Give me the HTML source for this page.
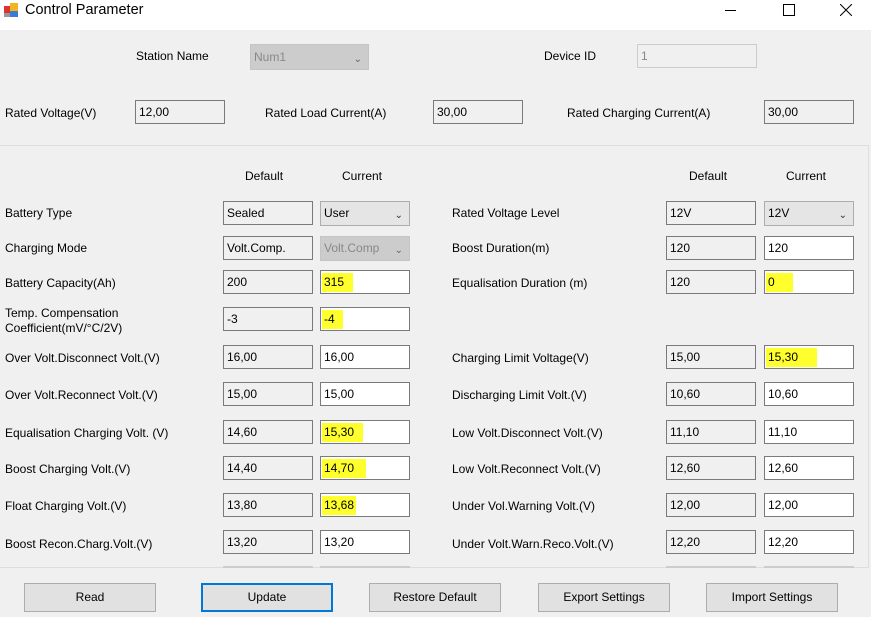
<!DOCTYPE html><html><head><style>
body{margin:0;width:871px;height:617px;background:#f0f0f0;font-family:"Liberation Sans",sans-serif;font-size:12px;color:#000;position:relative;overflow:hidden}
.a{position:absolute;white-space:nowrap}
.t{position:absolute;border:1px solid #7a7a7a;background:#f0f0f0;box-sizing:border-box;height:24px;line-height:22px;padding-left:3px}
.w{background:#fff}
.c{background:#e5e5e5;border-color:#adadad}
.d{background:#ccc;border-color:#c4c4c4;color:#888}
.b{position:absolute;top:583px;width:132px;height:29px;box-sizing:border-box;border:1px solid #adadad;background:#e1e1e1;text-align:center;line-height:27px}
.h{background:#ffff2e;padding:2px 2px 3px;margin-left:-2px}
.ar{position:absolute;right:6px;top:3px;color:#666;font-size:10px}
</style></head><body>
<div class="a" style="left:0;top:0;width:871px;height:30px;background:#fff"></div>
<svg class="a" style="left:3px;top:2px" width="16" height="16"><rect x="1" y="4" width="6" height="7" fill="#d33"/><rect x="7" y="1" width="8" height="8" fill="#f2b51c"/><rect x="7" y="9" width="8" height="6" fill="#3a7bd5"/><rect x="1" y="11" width="6" height="4" fill="#999"/></svg>
<div class="a" style="left:25px;top:2px;font-size:14.5px">Control Parameter</div>
<div class="a" style="left:725px;top:10px;width:11px;height:1px;background:#000"></div>
<div class="a" style="left:783px;top:4px;width:10px;height:10px;border:1px solid #000"></div>
<svg class="a" style="left:840px;top:4px" width="12" height="12"><path d="M0 0L12 12M12 0L0 12" stroke="#000"/></svg>

<div class="a" style="left:136px;top:49px">Station Name</div>
<div class="t d" style="left:250px;top:44px;width:119px;height:26px;line-height:24px">Num1<span class="ar">&#8964;</span></div>
<div class="a" style="left:544px;top:49px">Device ID</div>
<div class="t" style="left:637px;top:44px;width:120px;border-color:#ccc;color:#888">1</div>
<div class="a" style="left:5px;top:106px">Rated Voltage(V)</div>
<div class="t" style="left:135px;top:100px;width:90px">12,00</div>
<div class="a" style="left:265px;top:106px">Rated Load Current(A)</div>
<div class="t" style="left:433px;top:100px;width:90px">30,00</div>
<div class="a" style="left:567px;top:106px">Rated Charging Current(A)</div>
<div class="t" style="left:764px;top:100px;width:90px">30,00</div>
<div class="a" style="left:0;top:145px;width:868px;height:421px;border-top:1px solid #ddd;border-right:1px solid #ddd;border-bottom:1px solid #ddd"></div>
<div class="a" style="left:223px;top:566px;width:90px;height:2px;background:#ccc"></div>
<div class="a" style="left:320px;top:566px;width:90px;height:2px;background:#ccc"></div>
<div class="a" style="left:666px;top:566px;width:90px;height:2px;background:#ccc"></div>
<div class="a" style="left:764px;top:566px;width:90px;height:2px;background:#ccc"></div>
<div class="a" style="left:245px;top:169px">Default</div><div class="a" style="left:342px;top:169px">Current</div>
<div class="a" style="left:689px;top:169px">Default</div><div class="a" style="left:786px;top:169px">Current</div>

<div class="a" style="left:5px;top:206px">Battery Type</div>
<div class="t" style="left:223px;top:201px;width:90px">Sealed</div>
<div class="t c" style="left:320px;top:201px;width:90px;height:25px">User<span class="ar" style="color:#333">&#8964;</span></div>
<div class="a" style="left:5px;top:241px">Charging Mode</div>
<div class="t" style="left:223px;top:236px;width:90px">Volt.Comp.</div>
<div class="t d" style="left:320px;top:236px;width:90px;height:25px">Volt.Comp<span class="ar">&#8964;</span></div>
<div class="a" style="left:5px;top:276px">Battery Capacity(Ah)</div>
<div class="t" style="left:223px;top:270px;width:90px">200</div>
<div class="t w" style="left:320px;top:270px;width:90px"><span class="h">315&nbsp;&nbsp;</span></div>
<div class="a" style="left:5px;top:306px;line-height:15px">Temp. Compensation<br>Coefficient(mV/°C/2V)</div>
<div class="t" style="left:223px;top:307px;width:90px">-3</div>
<div class="t w" style="left:320px;top:307px;width:90px"><span class="h">-4&nbsp;&nbsp;</span></div>

<div class="a" style="left:452px;top:206px">Rated Voltage Level</div>
<div class="t" style="left:666px;top:201px;width:90px">12V</div>
<div class="t c" style="left:764px;top:201px;width:90px;height:25px">12V<span class="ar" style="color:#333">&#8964;</span></div>
<div class="a" style="left:452px;top:241px">Boost Duration(m)</div>
<div class="t" style="left:666px;top:236px;width:90px">120</div>
<div class="t w" style="left:764px;top:236px;width:90px">120</div>
<div class="a" style="left:452px;top:276px">Equalisation Duration (m)</div>
<div class="t" style="left:666px;top:270px;width:90px">120</div>
<div class="t w" style="left:764px;top:270px;width:90px"><span class="h">0&nbsp;&nbsp;&nbsp;&nbsp;&nbsp;</span></div>

<div class="a" style="left:5px;top:351px">Over Volt.Disconnect Volt.(V)</div><div class="t" style="left:223px;top:345px;width:90px">16,00</div><div class="t w" style="left:320px;top:345px;width:90px">16,00</div>
<div class="a" style="left:5px;top:388px">Over Volt.Reconnect Volt.(V)</div><div class="t" style="left:223px;top:382px;width:90px">15,00</div><div class="t w" style="left:320px;top:382px;width:90px">15,00</div>
<div class="a" style="left:5px;top:426px">Equalisation Charging Volt. (V)</div><div class="t" style="left:223px;top:420px;width:90px">14,60</div><div class="t w" style="left:320px;top:420px;width:90px"><span class="h">15,30&nbsp;&nbsp;</span></div>
<div class="a" style="left:5px;top:462px">Boost Charging Volt.(V)</div><div class="t" style="left:223px;top:456px;width:90px">14,40</div><div class="t w" style="left:320px;top:456px;width:90px"><span class="h">14,70&nbsp;&nbsp;&nbsp;</span></div>
<div class="a" style="left:5px;top:499px">Float Charging Volt.(V)</div><div class="t" style="left:223px;top:493px;width:90px">13,80</div><div class="t w" style="left:320px;top:493px;width:90px"><span class="h">13,68</span></div>
<div class="a" style="left:5px;top:537px">Boost Recon.Charg.Volt.(V)</div><div class="t" style="left:223px;top:530px;width:90px">13,20</div><div class="t w" style="left:320px;top:530px;width:90px">13,20</div>

<div class="a" style="left:452px;top:351px">Charging Limit Voltage(V)</div><div class="t" style="left:666px;top:345px;width:90px">15,00</div><div class="t w" style="left:764px;top:345px;width:90px"><span class="h">15,30&nbsp;&nbsp;&nbsp;&nbsp;&nbsp;</span></div>
<div class="a" style="left:452px;top:388px">Discharging Limit Volt.(V)</div><div class="t" style="left:666px;top:382px;width:90px">10,60</div><div class="t w" style="left:764px;top:382px;width:90px">10,60</div>
<div class="a" style="left:452px;top:426px">Low Volt.Disconnect Volt.(V)</div><div class="t" style="left:666px;top:420px;width:90px">11,10</div><div class="t w" style="left:764px;top:420px;width:90px">11,10</div>
<div class="a" style="left:452px;top:462px">Low Volt.Reconnect Volt.(V)</div><div class="t" style="left:666px;top:456px;width:90px">12,60</div><div class="t w" style="left:764px;top:456px;width:90px">12,60</div>
<div class="a" style="left:452px;top:499px">Under Vol.Warning Volt.(V)</div><div class="t" style="left:666px;top:493px;width:90px">12,00</div><div class="t w" style="left:764px;top:493px;width:90px">12,00</div>
<div class="a" style="left:452px;top:537px">Under Volt.Warn.Reco.Volt.(V)</div><div class="t" style="left:666px;top:530px;width:90px">12,20</div><div class="t w" style="left:764px;top:530px;width:90px">12,20</div>

<div class="b" style="left:24px">Read</div>
<div class="b" style="left:201px;border:2px solid #0078d7;line-height:25px">Update</div>
<div class="b" style="left:369px">Restore Default</div>
<div class="b" style="left:538px">Export Settings</div>
<div class="b" style="left:706px">Import Settings</div>
</body></html>
